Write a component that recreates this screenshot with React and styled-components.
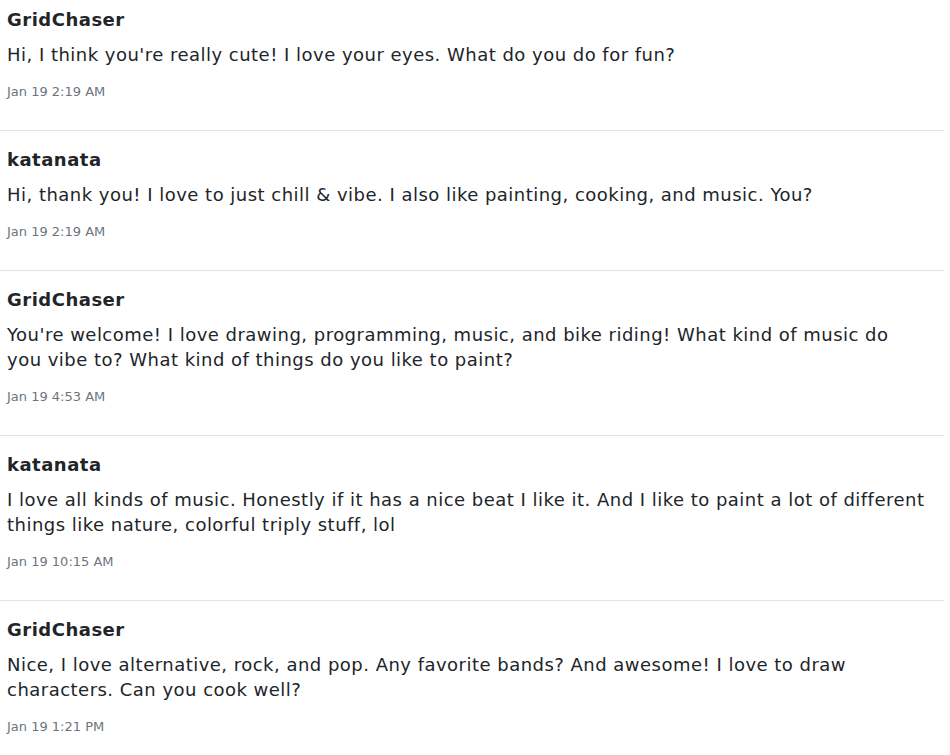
import styled, { createGlobalStyle } from "styled-components";

const GlobalStyle = createGlobalStyle`
  body {
    margin: 0;
    background: #fff;
    font-family: "DejaVu Sans", "Open Sans", sans-serif;
    color: #212529;
  }
`;

const MESSAGES = [
  {
    author: "GridChaser",
    text: "Hi, I think you're really cute! I love your eyes. What do you do for fun?",
    time: "Jan 19 2:19 AM",
  },
  {
    author: "katanata",
    text: "Hi, thank you! I love to just chill & vibe. I also like painting, cooking, and music. You?",
    time: "Jan 19 2:19 AM",
  },
  {
    author: "GridChaser",
    text: "You're welcome! I love drawing, programming, music, and bike riding! What kind of music do you vibe to? What kind of things do you like to paint?",
    time: "Jan 19 4:53 AM",
  },
  {
    author: "katanata",
    text: "I love all kinds of music. Honestly if it has a nice beat I like it. And I like to paint a lot of different things like nature, colorful triply stuff, lol",
    time: "Jan 19 10:15 AM",
  },
  {
    author: "GridChaser",
    text: "Nice, I love alternative, rock, and pop. Any favorite bands? And awesome! I love to draw characters. Can you cook well?",
    time: "Jan 19 1:21 PM",
  },
];

const List = styled.div`
  width: 944px;
  display: flex;
  flex-direction: column;
`;

const Item = styled.div`
  padding: 18px 18px 30px 7px;
  border-bottom: 1px solid #e2e2ea;
  display: flex;
  flex-direction: column;

  &:first-child {
    padding-top: 9px;
  }
`;

const Author = styled.div`
  font-weight: 700;
  font-size: 18px;
  line-height: 22px;
  letter-spacing: 0.5px;
  color: #212529;
`;

const Body = styled.div`
  margin-top: 11px;
  font-size: 18px;
  line-height: 25px;
  letter-spacing: 0.48px;
  color: #212529;
`;

const Time = styled.div`
  margin-top: 17px;
  font-size: 13px;
  line-height: 16px;
  color: #6c757d;
`;

const App = () => (
  <>
    <GlobalStyle />
    <List>
      {MESSAGES.map((m, i) => (
        <Item key={i}>
          <Author>{m.author}</Author>
          <Body>{m.text}</Body>
          <Time>{m.time}</Time>
        </Item>
      ))}
    </List>
  </>
);

export default App;
